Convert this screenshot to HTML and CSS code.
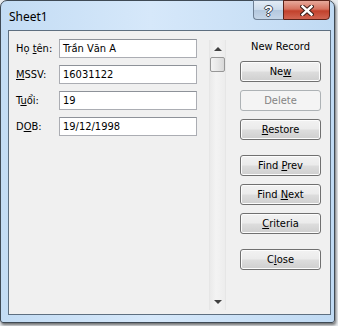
FILE: index.html
```html
<!DOCTYPE html>
<html>

<head>
    <title>Sheet1</title>
    <link rel="stylesheet" href="styles.css">
</head>

<body>
    <div class="window">
        <div class="titlebar">
            <span class="title">Sheet1</span>
            <div class="caption">
                <div class="cap-btn help">?</div>
                <div class="cap-btn close">
                    <svg width="14" height="11" viewBox="0 0 14 11">
                        <path d="M2.5 1.5 L11.5 9.5 M11.5 1.5 L2.5 9.5" stroke="#3a1d18" stroke-width="4.4" stroke-linecap="square" fill="none" />
                        <path d="M2.5 1.5 L11.5 9.5 M11.5 1.5 L2.5 9.5" stroke="#ffffff" stroke-width="2.4" stroke-linecap="square" fill="none" />
                    </svg>
                </div>
            </div>
        </div>
        <div class="client">
            <div class="fields">
                <div class="row">
                    <label>Họ <u>t</u>ên:</label>
                    <div class="input">Trần Văn A</div>
                </div>
                <div class="row">
                    <label><u>M</u>SSV:</label>
                    <div class="input">16031122</div>
                </div>
                <div class="row">
                    <label>T<u>u</u>ổi:</label>
                    <div class="input">19</div>
                </div>
                <div class="row">
                    <label>D<u>O</u>B:</label>
                    <div class="input">19/12/1998</div>
                </div>
            </div>

            <div class="scrollbar">
                <div class="arrow up"></div>
                <div class="thumb"></div>
                <div class="track"></div>
                <div class="arrow down"></div>
            </div>

            <div class="commands">
                <div class="record-label">New Record</div>
                <div class="btn-group">
                    <button class="btn">Ne<u>w</u></button>
                    <button class="btn" disabled>Delete</button>
                    <button class="btn"><u>R</u>estore</button>
                </div>
                <div class="btn-group">
                    <button class="btn">Find <u>P</u>rev</button>
                    <button class="btn">Find <u>N</u>ext</button>
                    <button class="btn"><u>C</u>riteria</button>
                </div>
                <div class="btn-group">
                    <button class="btn">C<u>l</u>ose</button>
                </div>
            </div>
        </div>
    </div>
</body>

</html>
```

FILE: styles.css
```css
* {
    box-sizing: border-box;
}

body {
    margin: 0;
    width: 338px;
    height: 326px;
    overflow: hidden;
    background: #e9ecef;
    font-family: "DejaVu Sans Condensed", "Liberation Sans", sans-serif;
    font-size: 11px;
    color: #000;
}

.window {
    width: 335px;
    height: 323px;
    border: 1px solid #3f4a55;
    border-radius: 7px 7px 3px 3px;
    background: linear-gradient(to right, #c3dcf4 0%, #d6e8fa 45%, #c0daf3 100%);
    box-shadow: 1px 2px 3px rgba(0, 0, 0, 0.55);
    display: flex;
    flex-direction: column;
}

.titlebar {
    height: 29px;
    display: flex;
    align-items: flex-start;
}

.title {
    padding: 8px 0 0 8px;
    line-height: 16px;
    font-family: "Noto Sans", "Open Sans", sans-serif;
    font-size: 12px;
    color: #000;
}

.caption {
    margin: -1px 4px 0 auto;
    display: flex;
}

.cap-btn {
    height: 20px;
    display: flex;
    align-items: center;
    justify-content: center;
}

.help {
    width: 30px;
    border: 1px solid #6e7f93;
    border-right: none;
    border-radius: 0 0 0 4px;
    background: linear-gradient(to bottom, #e3ecf6 0%, #ccdbeb 48%, #b4c8de 52%, #c5d6e8 100%);
    font-family: "Liberation Sans", sans-serif;
    font-weight: bold;
    font-size: 14px;
    color: #fff;
    text-shadow: 1px 0 #39434f, -1px 0 #39434f, 0 1px #39434f, 0 -1px #39434f;
    padding-top: 1px;
}

.close {
    width: 47px;
    border: 1px solid #5b2219;
    border-radius: 0 0 4px 0;
    background: linear-gradient(to bottom, #e7a99b 0%, #d6725f 45%, #c2412c 55%, #d16552 100%);
}

.client {
    flex: 1;
    margin: 0 3px 7px 7px;
    border: 1px solid #5e6f80;
    background: #f0f0f0;
    display: flex;
    align-items: flex-start;
    padding-left: 7px;
}

.fields {
    width: 181px;
    padding-top: 8px;
    display: flex;
    flex-direction: column;
    gap: 7px;
}

.row {
    display: flex;
    align-items: center;
    height: 19px;
}

.row label {
    width: 43px;
}

.input {
    width: 138px;
    height: 19px;
    border: 1px solid #abadb3;
    border-top-color: #8e9299;
    background: #fff;
    padding-left: 3px;
    line-height: 17px;
}

.scrollbar {
    width: 17px;
    height: 270px;
    margin: 9px 0 0 12px;
    border-left: 1px solid #e6e6e6;
    border-right: 1px solid #e6e6e6;
    background: linear-gradient(to right, #eaeaea, #f3f3f3 40%, #ededed);
    display: flex;
    flex-direction: column;
    align-items: center;
}

.arrow {
    height: 17px;
    width: 15px;
    display: flex;
    align-items: center;
    justify-content: center;
}

.arrow::after {
    content: "";
    border-left: 4px solid transparent;
    border-right: 4px solid transparent;
}

.arrow.up::after {
    border-bottom: 4px solid #404040;
}

.arrow.down::after {
    border-top: 4px solid #404040;
}

.thumb {
    width: 15px;
    height: 15px;
    border: 1px solid #979797;
    border-radius: 2px;
    background: linear-gradient(to right, #f3f3f3, #e8e8e8 50%, #d8d8d8);
}

.track {
    flex: 1;
}

.commands {
    width: 81px;
    margin-left: 14px;
    padding-top: 9px;
    display: flex;
    flex-direction: column;
    gap: 15px;
}

.record-label {
    line-height: 14px;
    text-align: center;
    margin-bottom: -8px;
}

.btn-group {
    display: flex;
    flex-direction: column;
    gap: 8px;
}

.btn {
    width: 81px;
    height: 21px;
    margin: 0;
    padding: 0;
    border: 1px solid #707070;
    border-radius: 3px;
    background: linear-gradient(to bottom, #f2f2f2 0%, #ebebeb 48%, #dddddd 52%, #cfcfcf 100%);
    box-shadow: inset 0 0 0 1px #fcfcfc;
    font-family: inherit;
    font-size: 11px;
    color: #000;
}

.btn:disabled {
    border-color: #adb2b5;
    background: #f4f4f4;
    color: #838383;
    box-shadow: none;
}
```
